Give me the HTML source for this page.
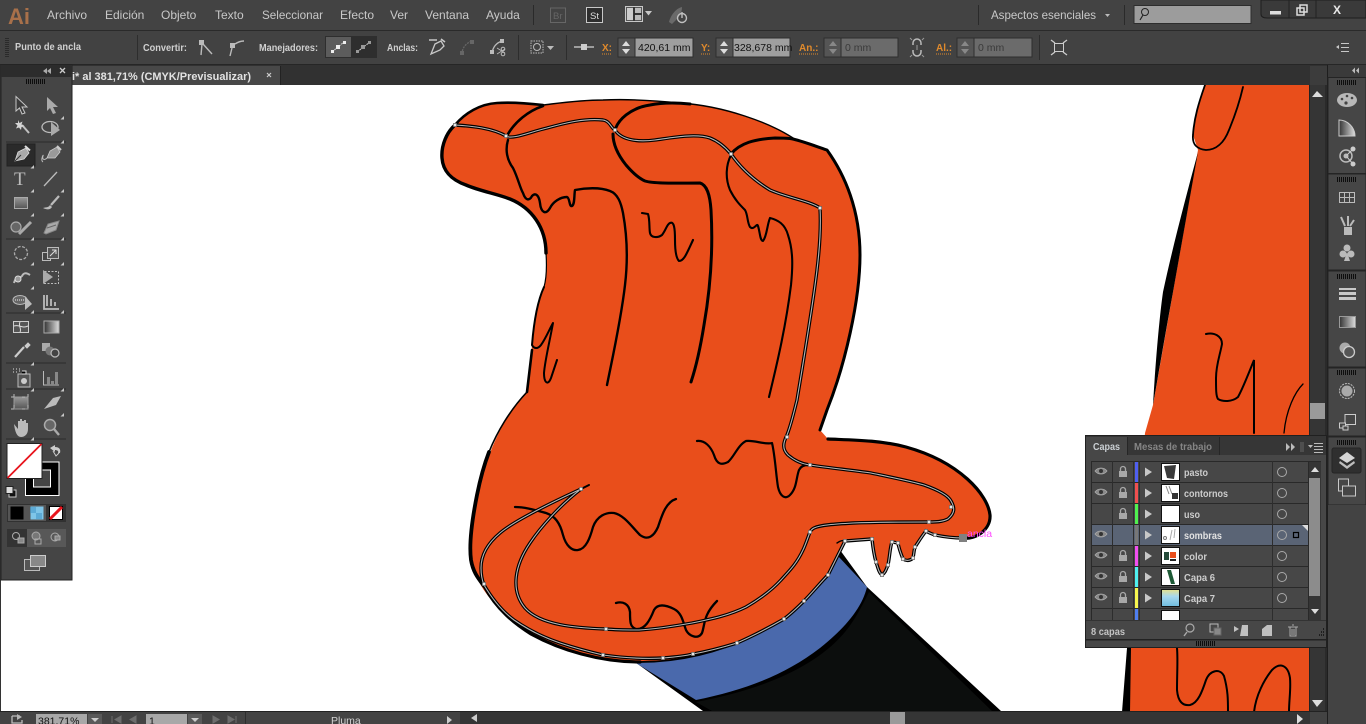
<!DOCTYPE html>
<html><head><meta charset="utf-8"><title>Illustrator</title>
<style>
html,body{margin:0;padding:0;width:1366px;height:724px;overflow:hidden;background:#3c3c3c}
svg{display:block;position:absolute;left:0;top:0}
text{font-family:"Liberation Sans",sans-serif}
.m{font-size:12px;fill:#c8c8c8}
.c{font-size:10px;font-weight:bold;fill:#d0d0d0}
.o{font-size:10px;font-weight:bold;fill:#e08a2c}
.v{font-size:10.5px;fill:#111}
.d{font-size:10.5px;fill:#3a3a3a}
.n{font-size:10px;font-weight:bold;fill:#cdcdcd}
.ic{fill:none;stroke:#bdbdbd;stroke-width:1.3}
.f{fill:#b4b4b4}
</style></head><body>
<svg width="1366" height="724" viewBox="0 0 1366 724" xmlns="http://www.w3.org/2000/svg">
<defs>
<linearGradient id="gr" x1="0" x2="1" y1="0" y2="0"><stop offset="0" stop-color="#333"/><stop offset="1" stop-color="#ddd"/></linearGradient>
<linearGradient id="gv" x1="0" x2="0" y1="0" y2="1"><stop offset="0" stop-color="#999"/><stop offset="1" stop-color="#555"/></linearGradient>
<linearGradient id="sky" x1="0" x2="0" y1="0" y2="1"><stop offset="0" stop-color="#e8e28a"/><stop offset=".4" stop-color="#a8d8ee"/><stop offset="1" stop-color="#6fbde0"/></linearGradient>
<path id="tri" d="M0 0L-3.5 3.5H0Z" fill="#c8c8c8"/>
<path id="eye" d="M-6 0C-3-4 3-4 6 0C3 4-3 4-6 0Z" fill="#888" stroke="#aaa" stroke-width=".8"/>
<g id="eyeg"><use href="#eye"/><circle r="2" fill="#333"/></g>
<g id="lock"><rect x="-4" y="-1" width="8" height="6" fill="#a8a8a8"/><path d="M-2.5-1V-3A2.5 2.5 0 0 1 2.5-3V-1" fill="none" stroke="#a8a8a8" stroke-width="1.3"/></g>
<path id="arr" d="M-3-4.5L4 0L-3 4.5Z" fill="#c8c8c8"/>
<circle id="tgt" r="4.5" fill="none" stroke="#aaa" stroke-width="1"/>
<g id="grip"><path d="M.5 0v5M2.500 0v5M4.500 0v5M6.500 0v5M8.500 0v5M10.500 0v5M12.500 0v5M14.500 0v5M16.500 0v5M18.500 0v5" stroke="#0d0d0d" stroke-width="1"/></g>
<rect id="an" x="-1.6" y="-1.6" width="3.2" height="3.2" fill="#e8e8e8" stroke="#555" stroke-width=".6"/>
<path id="s1" d="M455 125C472 126 492 128 506 136C512 140 530 132 547 128C565 123 585 118 603 120C610 121 611 128 615 130C622 141 640 142 655 140C670 138 695 133 710 138C720 142 726 148 731 154C740 167 752 179 770 190C785 197 810 201 820 208C821 225 820 245 817 270C814 295 807 340 797 400C794 412 791 425 787 435C783 443 782 449 788 455C795 461 802 464 810 465C830 468 850 470 871 473C890 477 910 481 924 485C938 490 948 495 951 501C955 508 955 513 948 519C942 522 936 522 929 522C905 522 880 522 853 523C835 524 820 525 814 528C812 529 811 530 810 532C807 540 805 546 803 550C796 565 788 572 781 580C770 592 758 600 746 607C730 615 712 619 692 623C675 626 657 629 639 630C628 630 617 630 606 629C575 628 540 625 525 608C510 590 515 565 530 543C540 528 560 505 581 489C555 501 515 520 500 533C488 543 481 555 481 568C481 575 482 580 484 585C493 600 503 612 514 620C530 631 545 638 560 643C575 648 590 652 603 655C625 658 645 659 663 658C675 657 685 656 693 654C710 651 724 647 737 643C755 635 770 627 784 619C792 613 798 607 804 601C812 593 820 583 828 575C834 563 840 551 845 541L872 539C873 548 874 555 876 562C878 568 879 573 882 575C885 573 886 570 888 565C890 555 890 547 892 542L898 543C899 549 901 554 903 559C906 561 910 561 913 558C914 553 914 550 915 547C919 541 922 536 926 531C929 533 932 534 935 535C945 537 955 538 963 538" fill="none"/>
</defs>

<!-- canvas -->
<rect x="0" y="85" width="1366" height="627" fill="#fff"/>
<rect x="0" y="85" width="1" height="627" fill="#333"/>

<!-- right arm -->
<path d="M1205 85C1199 100 1194 120 1193 135L1198 150L1153 405L1145 433L1130 648V712H1310V85Z" fill="#e94e1b"/>
<path d="M1198 152C1185 200 1172 250 1163 292C1159 320 1155 370 1153 405C1160 365 1166 330 1173 292Z" fill="#000"/>
<path d="M1127 648L1122 712H1130L1131 648Z" fill="#000"/>
<g fill="none" stroke="#000" stroke-linecap="round">
<path d="M1205 85C1199 102 1194 118 1193 135C1192 145 1197 149 1206 150C1216 150 1224 143 1229 130C1234 118 1240 100 1243 87" stroke-width="1.8"/>
<path d="M1206 334C1214 332 1222 336 1222 344C1220 355 1216 365 1216 378C1216 390 1216 396 1218 399C1223 402 1232 402 1238 397C1243 388 1248 375 1254 360V433" stroke-width="2"/>
<path d="M1303 384C1295 392 1286 410 1284 433" stroke-width="1.3"/>
<path d="M1177 648C1178 660 1177 672 1177 690C1178 702 1183 706 1190 705C1198 703 1202 692 1206 680C1210 670 1220 668 1224 676C1228 690 1228 700 1228 712" stroke-width="2"/>
<path d="M1254 712C1256 695 1264 680 1272 670C1280 662 1288 665 1290 678C1291 690 1289 700 1289 712" stroke-width="2"/>
</g>

<!-- sleeve -->
<path d="M867 587L1001 711H703L625 655L840 550Z" fill="#000"/>
<path d="M869 592L992 711H712L696 702C760 690 815 668 845 632C855 620 862 606 869 592Z" fill="#0c0e0d"/>
<path d="M631 660L696 700C745 690 785 675 820 648C845 628 862 608 867 587L838 556L700 620Z" fill="#4a69ac"/>

<!-- glove -->
<path d="M455 125C447 132 441 145 442 158C443 172 452 180 466 185C480 191 497 194 510 199C532 208 546 228 546 253C547 268 546 280 544 287C538 300 534 320 532 345L528 390C505 415 487 450 478 495C473 520 470 545 472 560C474 585 500 615 531 633C560 650 600 662 640 662C680 662 720 652 750 637C785 620 815 595 828 575L845 541L872 539C873 555 877 575 882 575C889 575 888 550 892 542C897 538 899 559 905 560C918 562 912 545 926 531C935 536 950 539 963 538C975 540 991 530 990 515C988 495 960 462 906 447C880 440 850 440 828 439L820 430L827 410C845 365 860 300 860 255C860 210 845 175 827 150C815 146 805 142 793 138C770 123 725 106 680 103C650 100 625 99 603 100C580 100 560 103 543 105C525 103 510 102 497 103C480 104 465 113 455 125Z" fill="#e94e1b"/>

<g fill="none" stroke="#000" stroke-linecap="round" stroke-linejoin="round">
<path d="M455 125C447 132 441 145 442 158C443 172 452 180 466 185C480 191 497 194 510 199C532 208 546 228 546 253" stroke-width="3.4"/>
<path d="M546 253C547 268 546 280 544 287" stroke-width="1.2"/>
<path d="M455 125C465 113 480 104 497 103C510 102 525 103 543 105" stroke-width="2.6"/>
<path d="M543 105C560 103 580 100 603 100C625 99 650 100 680 103C725 106 770 123 793 138" stroke-width="1.4"/>
<path d="M793 139C805 142 815 146 827 150C845 175 860 210 860 255C860 300 845 365 827 410L820 430" stroke-width="3"/>
<path d="M828 439C850 440 880 440 906 447C960 462 988 495 990 515C991 530 975 540 963 538" stroke-width="3.2"/>
<path d="M532 350L527 392" stroke-width="2.6"/>
<path d="M527 392C510 410 497 432 489 452" stroke-width="1.6"/>
<path d="M489 452C484 465 480 480 477 495C472 520 469 545 471 560C473 572 478 578 484 586" stroke-width="3.8"/>
<path d="M484 586C497 610 515 624 531 634C560 650 600 662 640 662" stroke-width="3.2"/>
<path d="M508 134C515 122 528 111 543 106" stroke-width="2.6"/>
<path d="M615 130C618 120 630 108 650 105C665 102 680 103 690 104" stroke-width="3"/>
<path d="M613 134C613 145 618 155 626 165C632 172 638 178 645 181C655 184 680 183 700 183C707 185 710 195 711 210C713 245 711 285 704 325C700 350 695 370 691 382" stroke-width="3"/>
<path d="M731 154C740 143 755 139 775 138C782 138 788 138 793 139" stroke-width="3"/>
<path d="M508 140C505 150 507 160 513 168C518 178 520 188 523 193C526 202 530 200 532 196C536 192 539 196 540 203C541 213 546 215 550 208C553 202 560 197 567 197C570 198 569 207 572 206C575 204 574 195 575 190C585 188 600 187 610 191C618 194 621 203 623 213C627 235 628 260 625 285C621 320 612 360 607 385" stroke-width="2.4"/>
<path d="M642 213L648 214C650 220 649 228 650 233C651 238 658 238 662 235C666 230 667 224 670 223C674 221 675 228 675 240C675 250 676 258 679 261C684 261 687 253 693 240" stroke-width="2.1"/>
<path d="M731 155C726 165 725 178 730 190C735 200 740 205 745 210C748 215 747 222 750 227C754 231 757 222 758 226C760 232 760 241 763 241C767 236 767 225 770 218C778 220 785 224 788 235C793 250 793 265 791 285C786 325 778 360 769 397" stroke-width="2.1"/>
<path d="M544 287C538 300 534 320 532 345C534 349 538 349 541 345C546 338 549 330 553 323C550 340 545 360 544 373C544 383 548 386 551 378C553 372 555 366 557 360" stroke-width="2"/>
<path d="M697 441C705 440 711 447 714 455C717 465 722 465 728 462C734 457 738 445 746 441C755 440 765 445 772 443C775 455 776 475 778 487C780 496 785 500 790 495C797 488 796 478 799 470C801 466 804 465 808 465" stroke-width="2.2"/>
<path d="M515 507C525 507 535 510 546 513C555 516 560 523 563 535C566 546 572 551 578 550C586 549 590 538 593 527C597 516 606 512 614 513C624 515 632 527 640 535C648 541 654 536 658 527C662 515 666 502 676 499" stroke-width="2.3"/>
<path d="M616 603C623 601 629 604 630 612C630 622 630 627 636 629C645 630 650 620 654 610C658 603 666 605 674 609C682 613 683 622 686 630C689 636 698 640 702 633C705 625 703 615 717 601" stroke-width="2.3"/>
<path d="M631 662L640 662C680 662 720 652 750 637" stroke-width="1.8"/>
<path d="M581 489L589 485" stroke-width="2"/>
<path d="M837 543C840 541 842 540 845 541" stroke-width="1.4"/>
</g>
<use href="#s1" stroke="#000" stroke-width="3.4"/>
<use href="#s1" stroke="#b5b5b5" stroke-width="1.1"/>
<g>
<use href="#an" x="455" y="125"/><use href="#an" x="506" y="136"/><use href="#an" x="615" y="130"/><use href="#an" x="731" y="154"/><use href="#an" x="820" y="208"/><use href="#an" x="787" y="437"/><use href="#an" x="810" y="465"/><use href="#an" x="951" y="507"/><use href="#an" x="929" y="522"/><use href="#an" x="810" y="532"/><use href="#an" x="606" y="629"/><use href="#an" x="581" y="489"/><use href="#an" x="484" y="584"/><use href="#an" x="603" y="655"/><use href="#an" x="663" y="658"/><use href="#an" x="693" y="654"/><use href="#an" x="737" y="643"/><use href="#an" x="784" y="619"/><use href="#an" x="804" y="601"/><use href="#an" x="828" y="575"/><use href="#an" x="845" y="541"/><use href="#an" x="872" y="539"/><use href="#an" x="876" y="562"/><use href="#an" x="882" y="575"/><use href="#an" x="888" y="565"/><use href="#an" x="892" y="542"/><use href="#an" x="898" y="543"/><use href="#an" x="903" y="559"/><use href="#an" x="913" y="558"/><use href="#an" x="915" y="547"/><use href="#an" x="926" y="531"/><use href="#an" x="935" y="535"/>
</g>
<rect x="959" y="534" width="8" height="8" fill="#808080"/>
<text x="967" y="537" font-size="10.5" fill="#ff4dff">ancla</text>

<!-- vertical scrollbar -->
<rect x="1310" y="85" width="17" height="627" fill="#353535"/>
<rect x="1310" y="403" width="15" height="16" fill="#9a9a9a"/>
<path d="M1312 97L1317 91L1323 97Z" fill="#ddd"/>
<path d="M1312 700H1323L1317 707Z" fill="#ddd"/>
<rect x="1309" y="85" width="1" height="627" fill="#222"/>
<rect x="1325" y="85" width="2" height="627" fill="#2a2a2a"/>

<!-- status bar -->
<rect x="0" y="711" width="1366" height="13" fill="#434343"/>
<rect x="0" y="711" width="1366" height="1" fill="#222"/>
<path d="M12 716h8m-8 0v7h10v-3" class="ic" stroke-width="1.4"/><path d="M17 720l5-3-5-3z" class="f"/>
<rect x="36" y="714" width="51" height="10" fill="#a8a8a8"/><text x="38" y="724.5" class="v" font-size="11">381,71%</text>
<rect x="88" y="714" width="14" height="10" fill="#5a5a5a"/><path d="M91 718h8l-4 4z" fill="#ccc"/>
<path d="M112 716v7M121 716l-6 3.5 6 3.5zM136 716l-6 3.5 6 3.5z" fill="#6d6d6d" stroke="#6d6d6d"/>
<rect x="146" y="714" width="41" height="10" fill="#a8a8a8"/><text x="149" y="724.5" class="v" font-size="11">1</text>
<rect x="188" y="714" width="14" height="10" fill="#5a5a5a"/><path d="M191 718h8l-4 4z" fill="#ccc"/>
<path d="M213 716l6 3.5-6 3.5zM228 716l6 3.5-6 3.5zM236 716v7" fill="#6d6d6d" stroke="#6d6d6d"/>
<rect x="245" y="712" width="1" height="12" fill="#2d2d2d"/>
<text x="331" y="724" font-size="10.5" fill="#d0d0d0">Pluma</text>
<rect x="460" y="712" width="850" height="12" fill="#353535"/>
<path d="M447 716l5 4-5 4zM477 714v8l-6-4z" fill="#ccc"/>
<rect x="890" y="712" width="15" height="12" fill="#9a9a9a"/>
<path d="M1297 714l6 5-6 5z" fill="#ddd"/>

<!-- menu bar -->
<rect x="0" y="0" width="1366" height="30" fill="#434343"/>
<rect x="0" y="30" width="1366" height="1.5" fill="#2a2a2a"/>
<text x="8" y="24" font-size="22" font-weight="bold" fill="#a8704a">Ai</text>
<text x="47" y="19" class="m">Archivo</text><text x="105" y="19" class="m">Edición</text><text x="161" y="19" class="m">Objeto</text><text x="215" y="19" class="m">Texto</text><text x="262" y="19" class="m" textLength="61" lengthAdjust="spacingAndGlyphs">Seleccionar</text><text x="340" y="19" class="m">Efecto</text><text x="390" y="19" class="m">Ver</text><text x="425" y="19" class="m">Ventana</text><text x="486" y="19" class="m">Ayuda</text>
<rect x="533" y="5" width="1" height="20" fill="#2a2a2a"/>
<rect x="550.500" y="8" width="15" height="14.500" fill="none" stroke="#666"/><text x="553" y="19" font-size="9.500" fill="#666">Br</text>
<rect x="586.500" y="7.500" width="16" height="15" fill="#2e2e2e" stroke="#c8c8c8"/><text x="590" y="19" font-size="9.500" fill="#ddd">St</text>
<rect x="625.500" y="6.500" width="17" height="15" fill="#555" stroke="#c8c8c8"/><path d="M634 7v14M634 14h8" stroke="#222" stroke-width="1.2"/><rect x="627" y="8" width="6" height="12" fill="#ccc"/><rect x="635" y="8" width="6" height="5" fill="#bbb"/><rect x="635" y="15" width="6" height="5" fill="#bbb"/>
<path d="M645 11h7l-3.500 4.500z" fill="#c8c8c8"/>
<path d="M669 22C671 14 677 8 682 7C682 13 679 17 676 20L672 24Z" fill="#6a6a6a"/><circle cx="682" cy="18" r="4.500" fill="none" stroke="#c0c0c0" stroke-width="1.400"/><path d="M682 12v6" stroke="#c0c0c0" stroke-width="1.400"/>
<rect x="978" y="5" width="1" height="20" fill="#2a2a2a"/>
<text x="991" y="19" class="m" textLength="105" lengthAdjust="spacingAndGlyphs">Aspectos esenciales</text><path d="M1105 14h5l-2.500 3z" fill="#bbb"/>
<rect x="1124" y="5" width="1" height="20" fill="#2a2a2a"/>
<rect x="1134" y="5.500" width="117" height="18" fill="#9c9c9c" stroke="#2d2d2d"/>
<circle cx="1145" cy="12" r="3.500" fill="none" stroke="#222"/><path d="M1143 15l-3 5" stroke="#222" stroke-width="1.200"/>
<path d="M1261 0H1366V18H1267Q1261 18 1261 14Z" fill="#3a3a3a" stroke="#1e1e1e"/>
<path d="M1289 0v18M1316 0v18" stroke="#222"/>
<rect x="1270" y="11" width="11" height="3.500" fill="#ddd"/>
<rect x="1297" y="8" width="7" height="7" fill="none" stroke="#ddd" stroke-width="1.500"/><rect x="1300" y="5" width="7" height="7" fill="none" stroke="#ddd" stroke-width="1.500"/>
<text x="1333" y="14" font-size="12" font-weight="bold" fill="#e8e8e8">X</text>

<!-- control bar -->
<rect x="0" y="31" width="1366" height="33" fill="#424242"/>
<rect x="0" y="64" width="1366" height="1.500" fill="#262626"/>
<path d="M6 38v19M8 38v19" stroke="#111" stroke-dasharray="1 1"/>
<text x="15" y="50" class="c" textLength="66" lengthAdjust="spacingAndGlyphs">Punto de ancla</text>
<rect x="137" y="35" width="1" height="25" fill="#2d2d2d"/>
<text x="143" y="51" class="c" textLength="44" lengthAdjust="spacingAndGlyphs">Convertir:</text>
<rect x="199" y="40" width="5" height="5" fill="#bbb"/><path d="M202 44l-1 11M203 44l9 10" stroke="#bbb" stroke-width="1.400" fill="none"/>
<rect x="230" y="43" width="5" height="5" fill="#bbb"/><path d="M232 48l-2 8M235 44c3-2 6-3 9-3" stroke="#bbb" stroke-width="1.400" fill="none"/>
<text x="259" y="51" class="c" textLength="59" lengthAdjust="spacingAndGlyphs">Manejadores:</text>
<rect x="325" y="36" width="52" height="22" fill="#2e2e2e"/>
<rect x="326" y="37" width="25" height="20" fill="#5c5c5c"/>
<path d="M332 52L344 42M357 52L370 42" stroke="#ccc" stroke-width="1" stroke-dasharray="2 1"/>
<rect x="336" y="45" width="4" height="4" fill="#eee"/><rect x="361" y="45" width="4" height="4" fill="#999"/><rect x="331" y="50" width="3" height="3" fill="#eee"/><rect x="343" y="41" width="3" height="3" fill="#eee"/><rect x="356" y="50" width="3" height="3" fill="#999"/><rect x="368" y="41" width="3" height="3" fill="#999"/>
<text x="387" y="51" class="c" textLength="31" lengthAdjust="spacingAndGlyphs">Anclas:</text>
<path d="M431 54L435 44L441 41L444 46L440 50Z" fill="none" stroke="#c8c8c8" stroke-width="1.300"/><path d="M429 40h8M441 39l4 3" stroke="#c8c8c8" stroke-width="1.500"/>
<path d="M462 54c0-6 4-11 10-13" fill="none" stroke="#666" stroke-width="1.300" stroke-dasharray="2 1"/><rect x="460" y="51" width="4" height="4" fill="#666"/><rect x="470" y="40" width="4" height="4" fill="#666"/>
<path d="M492 53c1-6 4-10 10-12" fill="none" stroke="#bbb" stroke-width="1.300"/><rect x="490" y="50" width="4" height="4" fill="#bbb"/><rect x="500" y="39" width="4" height="4" fill="#bbb"/><circle cx="503" cy="49" r="1.800" fill="none" stroke="#bbb"/><circle cx="503" cy="54" r="1.800" fill="none" stroke="#bbb"/><path d="M497 48l8 5M497 54l8-5" stroke="#bbb" stroke-width=".8"/>
<rect x="518" y="35" width="1" height="25" fill="#2d2d2d"/>
<rect x="531" y="41" width="12" height="12" fill="none" stroke="#bbb" stroke-dasharray="1.500 1"/><circle cx="537" cy="47" r="3.500" fill="none" stroke="#bbb"/><path d="M547 46h7l-3.500 4z" fill="#bbb"/>
<rect x="566" y="35" width="1" height="25" fill="#2d2d2d"/>
<path d="M574 47h20" stroke="#bbb" stroke-width="1.500"/><rect x="581" y="44" width="6" height="6" fill="#ccc"/>
<text x="602" y="51" class="o">X:</text>
<path d="M602 54h9M701 54h9M799 54h19M936 54h15" stroke="#e08a2c" stroke-dasharray="1 1"/>
<rect x="618" y="38" width="75" height="19" fill="#9f9f9f" stroke="#2e2e2e"/><rect x="618" y="38" width="17" height="19" fill="#555" stroke="#2e2e2e"/><path d="M622 46h8l-4-5zM622 49h8l-4 5z" fill="#ddd"/>
<text x="638" y="51" class="v">420,61 mm</text>
<text x="701" y="51" class="o">Y:</text>
<rect x="716" y="38" width="74" height="19" fill="#9f9f9f" stroke="#2e2e2e"/><rect x="716" y="38" width="17" height="19" fill="#555" stroke="#2e2e2e"/><path d="M720 46h8l-4-5zM720 49h8l-4 5z" fill="#ddd"/>
<text x="734" y="51" class="v">328,678 mm</text>
<text x="799" y="51" class="o">An.:</text>
<rect x="824" y="38" width="74" height="19" fill="#6b6b6b" stroke="#2e2e2e"/><rect x="824" y="38" width="17" height="19" fill="#555" stroke="#2e2e2e"/><path d="M829 46h8l-4-5zM829 49h8l-4 5z" fill="#888"/>
<text x="845" y="51" class="d">0 mm</text>
<path d="M913 45v-2a4 4 0 0 1 8 0v2M913 50v2a4 4 0 0 0 8 0v-2" fill="none" stroke="#bbb" stroke-width="1.500"/><path d="M910 38l2 2M924 38l-2 2M910 57l2-2M924 57l-2-2M917 45v5" stroke="#999"/>
<text x="936" y="51" class="o">Al.:</text>
<rect x="957" y="38" width="75" height="19" fill="#6b6b6b" stroke="#2e2e2e"/><rect x="957" y="38" width="17" height="19" fill="#555" stroke="#2e2e2e"/><path d="M961 46h8l-4-5zM961 49h8l-4 5z" fill="#888"/>
<text x="978" y="51" class="d">0 mm</text>
<rect x="1039" y="35" width="1" height="25" fill="#2d2d2d"/>
<rect x="1054.500" y="43.500" width="9" height="8" fill="none" stroke="#ccc"/><path d="M1051 40l4 3M1067 40l-4 3M1051 55l4-3M1067 55l-4-3" stroke="#ccc" stroke-width="1.300"/>
<path d="M1336 47l3-2v4z" fill="#c8c8c8"/><path d="M1341 43.500h8M1341 47.500h8M1341 51.500h8" stroke="#c8c8c8"/>

<!-- tab bar -->
<rect x="0" y="65" width="1310" height="20" fill="#313131"/>
<rect x="70" y="66" width="211" height="19" fill="#484848"/>
<rect x="280" y="66" width="1" height="19" fill="#222"/>
<text x="72" y="80" font-size="11" font-weight="bold" fill="#e2e2e2" textLength="179" lengthAdjust="spacingAndGlyphs">i* al 381,71% (CMYK/Previsualizar)</text>
<path d="M267 73l4 4M271 73l-4 4" stroke="#ccc" stroke-width="1.200"/>

<!-- tools panel -->
<rect x="1" y="65" width="71" height="515" fill="#454545" stroke="#222"/>
<rect x="1" y="65" width="71" height="12" fill="#2c2c2c"/>
<path d="M47 68l-4 3 4 3zM51 68l-4 3 4 3z" fill="#aaa"/><path d="M60 68l5 5M65 68l-5 5" stroke="#ccc" stroke-width="1.300"/>
<use href="#grip" x="26" y="79"/>
<path d="M6 142H66M6 239H66M6 313H66M6 363H66M6 389H66M6 439H66" stroke="#2c2c2c"/>
<rect x="7" y="144" width="28" height="22" fill="#2a2a2a" stroke="#222"/>
<path d="M16 96.500V111L19.500 108L22 114L25 113L22 107H27Z" fill="#3b3b3b" stroke="#c6c6c6" stroke-width="1"/>
<path d="M47 97V111L50 108L53 114L56 113L53 107H58Z" fill="#aaa"/><use href="#tri" x="64" y="116"/>
<path d="M22 125L29 133" stroke="#c0c0c0" stroke-width="2"/><path d="M18 120l1.500 3 3-1.500-1 3 3 1.500-3 1-.5 3-2-2.500-3 1 1.500-3-2.500-2.500 3 0z" fill="#d5d5d5"/>
<ellipse cx="50" cy="127" rx="8" ry="5.500" fill="none" stroke="#bbb" stroke-width="1.300"/><path d="M51 122V136L60 130Z" fill="#aaa"/><use href="#tri" x="64" y="140"/>
<path d="M15 161L18 152L26 148L29 153L24 159Z" fill="#aaa" stroke="#ddd" stroke-width=".8"/><path d="M25 146l5 4.500" stroke="#ddd" stroke-width="2"/><path d="M15 161L21 155" stroke="#333"/><use href="#tri" x="34" y="165"/>
<path d="M47 158L50 151L57 147L60 152L55 158Z" fill="#999" stroke="#ccc" stroke-width=".8"/><path d="M57 146l4 4" stroke="#ccc" stroke-width="2"/><path d="M47 158c-3 3-5 1-4-2s-3 4 0 6" fill="none" stroke="#bbb"/>
<text x="14" y="185" font-size="19" fill="#bbb" style="font-family:'Liberation Serif',serif">T</text><use href="#tri" x="34" y="189"/>
<path d="M44 186L57 172" stroke="#bbb" stroke-width="1.300"/><use href="#tri" x="64" y="189"/>
<rect x="14.500" y="197.500" width="13" height="11" fill="url(#gv)" stroke="#aaa"/><use href="#tri" x="34" y="213"/>
<path d="M43 208c3-1 5 0 7-3l2 2c-2 3-5 3-9 1Z" fill="#bbb"/><path d="M51 205L59 196" stroke="#bbb" stroke-width="2.200"/><use href="#tri" x="64" y="213"/>
<circle cx="16" cy="227" r="5" fill="#666" stroke="#aaa" stroke-width="1.200"/><path d="M19 234L31 222" stroke="#aaa" stroke-width="3"/><use href="#tri" x="34" y="237"/>
<path d="M44 233L48 224L59 221L56 230L46 234Z" fill="#aaa" stroke="#888"/><path d="M47 228l9-3" stroke="#666"/><use href="#tri" x="64" y="237"/>
<circle cx="21" cy="253" r="6.500" fill="none" stroke="#aaa" stroke-width="1.300" stroke-dasharray="3 1.500"/><use href="#tri" x="34" y="262"/>
<rect x="42.500" y="252.500" width="8" height="8" fill="none" stroke="#bbb"/><rect x="47.500" y="247.500" width="11" height="11" fill="#555" stroke="#bbb"/><path d="M50 256l6-6M52 250h4v4" stroke="#ddd" fill="none"/><use href="#tri" x="64" y="262"/>
<path d="M14 283c2-8 6-4 8-7 2-4 5-3 8-1" fill="none" stroke="#bbb" stroke-width="2"/><circle cx="18" cy="279" r="3" fill="#999" stroke="#ddd"/><use href="#tri" x="34" y="286"/>
<rect x="44.500" y="271.500" width="14" height="12" fill="none" stroke="#bbb" stroke-dasharray="2 1.500"/><path d="M43 270V284L53 277Z" fill="#aaa"/>
<ellipse cx="20" cy="300" rx="7" ry="4.500" fill="#666" stroke="#bbb"/><path d="M15 300h9" stroke="#eee" stroke-dasharray="1 1"/><path d="M25 296V310L32 304Z" fill="#bbb"/><use href="#tri" x="34" y="310"/>
<path d="M44 295v14h15M47 295v11M51 299v7M55 302v4" stroke="#bbb" stroke-width="1.800" fill="none"/><use href="#tri" x="64" y="310"/>
<rect x="13.500" y="321.500" width="15" height="11" fill="#555" stroke="#ccc"/><path d="M14 326c5-2 8 3 14 0M20 322c-2 4 2 7 0 10" stroke="#ddd" fill="none"/>
<rect x="44" y="321" width="15" height="12" fill="url(#gr)" stroke="#aaa"/>
<path d="M15 357L24 347" stroke="#ccc" stroke-width="2.200"/><path d="M25 346l3-3 2 2-3 3z" fill="#ccc" stroke="#ccc"/><use href="#tri" x="34" y="362"/>
<rect x="42" y="343" width="8" height="8" fill="#aaa"/><circle cx="50" cy="351" r="4.500" fill="#777"/><circle cx="55" cy="353" r="4" fill="#444" stroke="#bbb" stroke-width="1.200"/>
<rect x="18" y="374" width="12" height="13" fill="#555" stroke="#bbb"/><circle cx="24" cy="381" r="3" fill="#ccc"/><path d="M13 369h1M16 369h1M19 369h1M13 372h1M16 372h1M19 371h1M22 371h4v3h-4" stroke="#ddd"/><use href="#tri" x="34" y="388"/>
<path d="M43.500 371V385H59" stroke="#bbb" fill="none"/><path d="M47 377h3v8h-3zM51 381h3v4h-3zM55 372h3v13h-3z" fill="#888"/><use href="#tri" x="64" y="388"/>
<rect x="14" y="397" width="14" height="12" fill="url(#gv)" stroke="#999"/><path d="M11 397h20M11 409h20M14 394v18M28 394v18" stroke="#bbb" stroke-dasharray="3 8"/>
<path d="M44 409L53 398L61 396L56 405Z" fill="#bbb"/><use href="#tri" x="64" y="413"/>
<path d="M14 424L18 429V421h2V419h2V421h2V420h2V423h2V429C28 434 25 437 21 437C17 437 15 432 14 424Z" fill="#bbb"/><use href="#tri" x="34" y="437"/>
<circle cx="50" cy="425" r="5.500" fill="#666" stroke="#aaa" stroke-width="1.500"/><path d="M54 429L59 435" stroke="#aaa" stroke-width="2.400"/>
<rect x="25.500" y="462" width="33.500" height="33.500" fill="#000" stroke="#fff" stroke-width="1"/>
<rect x="33.500" y="470" width="17" height="17" fill="#454545" stroke="#fff" stroke-width="1"/>
<rect x="7" y="443.500" width="35" height="35" fill="#fff" stroke="#222"/><path d="M7.500 478L41.500 444" stroke="#e8141c" stroke-width="1.800"/>
<path d="M50 448l5-3v2c4 0 6 2 5 6l-2 0c1-2-1-3-3-3v2z" fill="#ccc"/><path d="M53 451l3 5 3-3" fill="none" stroke="#ccc"/>
<rect x="9" y="490" width="7" height="7" fill="#111" stroke="#ccc"/><rect x="6" y="486.500" width="7" height="7" fill="#ddd" stroke="#222"/>
<rect x="7" y="504" width="59" height="18" fill="#313131"/><rect x="8" y="505" width="38" height="16" fill="#555"/>
<rect x="10.500" y="506.500" width="13" height="13" fill="#000"/>
<rect x="30.500" y="506.500" width="13" height="13" fill="#7fc5e8"/><path d="M30 507h6v6h-6zM36 513h6v6h-6z" fill="#3b8fc1" opacity=".5"/>
<rect x="49.500" y="506.500" width="13" height="13" fill="#fff" stroke="#000"/><path d="M50 519L62 507" stroke="#e8141c" stroke-width="3"/>
<rect x="7" y="529" width="59" height="18" fill="#585858"/><rect x="7" y="529" width="20" height="18" fill="#333"/>
<g fill="none" stroke="#aaa"><circle cx="16" cy="536" r="3.500"/><rect x="18" y="538" width="6" height="5" fill="#888"/><circle cx="36" cy="536" r="4" fill="#777"/><rect x="35" y="539" width="6" height="5"/><circle cx="55" cy="537" r="4"/><rect x="55" y="536" width="5" height="4" fill="#888"/></g>
<rect x="24.500" y="559.500" width="15" height="11" fill="#555" stroke="#bbb"/><rect x="30.500" y="555.500" width="15" height="11" fill="#888" stroke="#ccc"/>

<!-- layers panel -->
<rect x="1085.500" y="435.500" width="241" height="212" fill="#474747" stroke="#202020"/>
<rect x="1086" y="436" width="240" height="19" fill="#363636"/>
<rect x="1086" y="437" width="41" height="18" fill="#474747"/>
<rect x="1127" y="437" width="1" height="18" fill="#262626"/><rect x="1219" y="437" width="1" height="18" fill="#262626"/>
<text x="1093" y="450" font-size="10" font-weight="bold" fill="#cbd0d4" textLength="27" lengthAdjust="spacingAndGlyphs">Capas</text>
<text x="1134" y="450" font-size="10" font-weight="bold" fill="#858585" textLength="78" lengthAdjust="spacingAndGlyphs">Mesas de trabajo</text>
<path d="M1286 443l4 4-4 4zM1291 443l4 4-4 4z" fill="#bbb"/><path d="M1301 442v10M1303 442v10" stroke="#666"/>
<path d="M1308 445h5l-2.500 3z" fill="#bbb"/><path d="M1314 443.500h9M1314 446.500h9M1314 449.500h9M1314 452.500h9" stroke="#bbb"/>
<rect x="1091" y="461" width="230" height="159" fill="#292929"/>
<rect x="1092" y="462" width="216" height="20" fill="#474747"/><rect x="1092" y="483" width="216" height="20" fill="#474747"/><rect x="1092" y="504" width="216" height="20" fill="#474747"/><rect x="1092" y="525" width="216" height="20" fill="#5a6475"/><rect x="1092" y="546" width="216" height="20" fill="#474747"/><rect x="1092" y="567" width="216" height="20" fill="#474747"/><rect x="1092" y="588" width="216" height="20" fill="#474747"/><rect x="1092" y="609" width="216" height="11" fill="#474747"/>
<path d="M1112.500 461V620M1133.500 461V620M1139.500 461V620M1272.500 461V620" stroke="#2d2d2d"/>
<rect x="1135" y="462" width="3" height="20" fill="#4f5ff0"/><rect x="1135" y="483" width="3" height="20" fill="#f04f4f"/><rect x="1135" y="504" width="3" height="20" fill="#4ff04f"/><rect x="1135" y="525" width="3" height="20" fill="#777"/><rect x="1135" y="546" width="3" height="20" fill="#f04ff0"/><rect x="1135" y="567" width="3" height="20" fill="#4ff0f0"/><rect x="1135" y="588" width="3" height="20" fill="#f5f54f"/><rect x="1135" y="609" width="3" height="11" fill="#4f7ff0"/>
<use href="#eyeg" x="1101" y="471"/><use href="#eyeg" x="1101" y="492"/><use href="#eyeg" x="1101" y="534"/><use href="#eyeg" x="1101" y="555"/><use href="#eyeg" x="1101" y="576"/><use href="#eyeg" x="1101" y="597"/>
<use href="#lock" x="1123" y="472"/><use href="#lock" x="1123" y="493"/><use href="#lock" x="1123" y="514"/><use href="#lock" x="1123" y="556"/><use href="#lock" x="1123" y="577"/><use href="#lock" x="1123" y="598"/>
<use href="#arr" x="1148" y="472"/><use href="#arr" x="1148" y="493"/><use href="#arr" x="1148" y="514"/><use href="#arr" x="1148" y="535"/><use href="#arr" x="1148" y="556"/><use href="#arr" x="1148" y="577"/><use href="#arr" x="1148" y="598"/>
<g stroke="#111">
<rect x="1161.500" y="463.500" width="18" height="17" fill="#fff"/><rect x="1161.500" y="484.500" width="18" height="17" fill="#fff"/><rect x="1161.500" y="505.500" width="18" height="17" fill="#fff"/><rect x="1161.500" y="526.500" width="18" height="17" fill="#fff"/><rect x="1161.500" y="547.500" width="18" height="17" fill="#fff"/><rect x="1161.500" y="568.500" width="18" height="17" fill="#fff"/><rect x="1161.500" y="589.500" width="18" height="17" fill="url(#sky)"/><rect x="1161.500" y="610.500" width="18" height="10" fill="#fff"/>
</g>
<path d="M1164 466L1176 465L1174 479L1167 478Z" fill="#3a3a3a"/>
<path d="M1166 486l3 8M1169 486l3 8" stroke="#888"/><rect x="1172" y="493" width="6" height="6" fill="#333"/>
<path d="M1172 530l-2 10M1175 529l-1 9" stroke="#aaa"/><circle cx="1165" cy="538" r="1.500" fill="none" stroke="#777"/>
<rect x="1164" y="552" width="5" height="8" fill="#244a3a"/><rect x="1170" y="552" width="6" height="6" fill="#e94e1b"/><path d="M1170 560h6" stroke="#222" stroke-width="2"/>
<path d="M1167 570L1171 570L1175 584L1171 584Z" fill="#1e5a36"/>
<text x="1184" y="476" class="n" textLength="24" lengthAdjust="spacingAndGlyphs">pasto</text><text x="1184" y="497" class="n" textLength="44" lengthAdjust="spacingAndGlyphs">contornos</text><text x="1184" y="518" class="n" textLength="16" lengthAdjust="spacingAndGlyphs">uso</text><text x="1184" y="539" class="n" textLength="38" lengthAdjust="spacingAndGlyphs" style="fill:#e2e2e2">sombras</text><text x="1184" y="560" class="n" textLength="23" lengthAdjust="spacingAndGlyphs">color</text><text x="1184" y="581" class="n" textLength="31" lengthAdjust="spacingAndGlyphs">Capa 6</text><text x="1184" y="602" class="n" textLength="31" lengthAdjust="spacingAndGlyphs">Capa 7</text>
<use href="#tgt" x="1282" y="472"/><use href="#tgt" x="1282" y="493"/><use href="#tgt" x="1282" y="514"/><use href="#tgt" x="1282" y="535"/><use href="#tgt" x="1282" y="556"/><use href="#tgt" x="1282" y="577"/><use href="#tgt" x="1282" y="598"/>
<rect x="1293.500" y="532.500" width="5" height="5" fill="none" stroke="#000" stroke-width="1.200"/>
<path d="M1302 525h6v6z" fill="#ddd"/>
<rect x="1309" y="462" width="12" height="158" fill="#353535"/><rect x="1309" y="478" width="11" height="118" fill="#8c8c8c"/>
<path d="M1311 472l4-5 4 5zM1311 609h8l-4 5z" fill="#ddd"/>
<rect x="1086" y="620" width="240" height="1" fill="#333"/>
<text x="1091" y="635" class="n" style="fill:#c4c4c4" textLength="34" lengthAdjust="spacingAndGlyphs">8 capas</text>
<circle cx="1190" cy="628" r="4" fill="none" stroke="#aaa" stroke-width="1.200"/><path d="M1187 632l-3 4" stroke="#aaa" stroke-width="1.400"/>
<rect x="1210" y="624" width="8" height="8" fill="none" stroke="#bbb"/><rect x="1214" y="628" width="7" height="7" fill="#888" stroke="#666"/>
<path d="M1234 626l5 3-5 3zM1242 625h6v11h-8z" fill="#c0c0c0"/>
<rect x="1262" y="625" width="10" height="11" fill="#c0c0c0"/><path d="M1262 625h5l-5 4z" fill="#444"/>
<path d="M1288 627h10M1290 627v9h6v-9M1292 625h2M1292 629v6M1294 629v6" stroke="#aaa" fill="none"/>
<path d="M1323 629h1M1321 632h1M1323 632h1M1319 635h1M1321 635h1M1323 635h1" stroke="#111" stroke-width="1.400"/>
<rect x="1086" y="639" width="240" height="1.500" fill="#222"/>
<use href="#grip" x="1196" y="641"/>

<!-- right dock -->
<rect x="1327" y="65" width="39" height="647" fill="#3a3a3a"/>
<rect x="1327" y="65" width="1" height="659" fill="#1e1e1e"/>
<path d="M1328 711h38V724h-38z" fill="#434343"/>
<path d="M1354 68l-3 3 3 3zM1358 68l-3 3 3 3z" fill="#bbb" transform="translate(1 -.5)"/>
<g fill="#464646" stroke="#242424">
<rect x="1328" y="77.500" width="38" height="96"/><rect x="1328" y="174" width="38" height="96"/><rect x="1328" y="271" width="38" height="96"/><rect x="1328" y="368" width="38" height="68"/><rect x="1328" y="437" width="38" height="68"/>
</g>
<rect x="1328" y="505" width="38" height="206" fill="#434343"/>
<use href="#grip" x="1337" y="80"/><use href="#grip" x="1337" y="177"/><use href="#grip" x="1337" y="274"/><use href="#grip" x="1337" y="370"/><use href="#grip" x="1337" y="440"/>
<ellipse cx="1347" cy="100" rx="10" ry="7" fill="#b8b8b8"/><circle cx="1342" cy="99" r="1.300" fill="#444"/><circle cx="1347" cy="96" r="1.300" fill="#444"/><circle cx="1352" cy="98" r="1.300" fill="#444"/><circle cx="1346" cy="103" r="1.600" fill="#444"/>
<path d="M1339 136V120C1348 120 1355 128 1355 136Z" fill="url(#gr)" stroke="#ccc"/>
<circle cx="1346" cy="156" r="6" fill="none" stroke="#bbb" stroke-width="1.500"/><circle cx="1346" cy="156" r="2.500" fill="#bbb"/><path d="M1347 155L1353 149M1347 157L1353 164" stroke="#ccc"/><circle cx="1353" cy="149" r="2.500" fill="#ccc"/><circle cx="1353" cy="164" r="2.500" fill="#ccc"/>
<rect x="1339.500" y="192.500" width="15" height="10" fill="#444" stroke="#bbb"/><path d="M1339 197.500h16M1344.500 192v11M1349.500 192v11" stroke="#bbb"/>
<rect x="1344" y="227" width="8" height="8" fill="#bbb"/><path d="M1345 226l-4-9M1348 226v-10M1350 226l4-6" stroke="#bbb" stroke-width="2"/>
<circle cx="1347" cy="248" r="3.500" fill="#bbb"/><circle cx="1343" cy="254" r="3.500" fill="#bbb"/><circle cx="1351" cy="254" r="3.500" fill="#bbb"/><path d="M1347 252l-3 9h6z" fill="#bbb"/>
<rect x="1339" y="288" width="17" height="2" fill="#c8c8c8"/><rect x="1339" y="292" width="17" height="3" fill="#c8c8c8"/><rect x="1339" y="297" width="17" height="3" fill="#c8c8c8"/>
<rect x="1339.500" y="316.500" width="16" height="11" fill="url(#gr)" stroke="#999"/>
<circle cx="1345" cy="348" r="5.500" fill="#aaa"/><circle cx="1349" cy="352" r="5.500" fill="#555" stroke="#ccc" stroke-width="1.300"/>
<circle cx="1347" cy="391" r="7.500" fill="none" stroke="#bbb" stroke-dasharray="2 1"/><circle cx="1347" cy="391" r="5.500" fill="#aaa"/>
<rect x="1345" y="414.500" width="10.500" height="10" fill="#464646" stroke="#ccc"/><rect x="1339.500" y="423" width="6" height="5" fill="#464646" stroke="#ccc"/><rect x="1343" y="426" width="5" height="4" fill="#464646" stroke="#ccc"/>
<rect x="1332" y="448" width="29" height="25" rx="2" fill="#2f2f2f" stroke="#242424"/>
<path d="M1347 452L1355 458L1347 463L1339 458Z" fill="#d5d5d5"/><path d="M1340 461L1347 466L1354 461L1355 463L1347 469L1339 463Z" fill="#bdbdbd"/>
<rect x="1338.500" y="479" width="10" height="12" fill="none" stroke="#c8c8c8"/><rect x="1342.500" y="486" width="13" height="10" fill="#464646" stroke="#c8c8c8"/>
</svg>
</body></html>
